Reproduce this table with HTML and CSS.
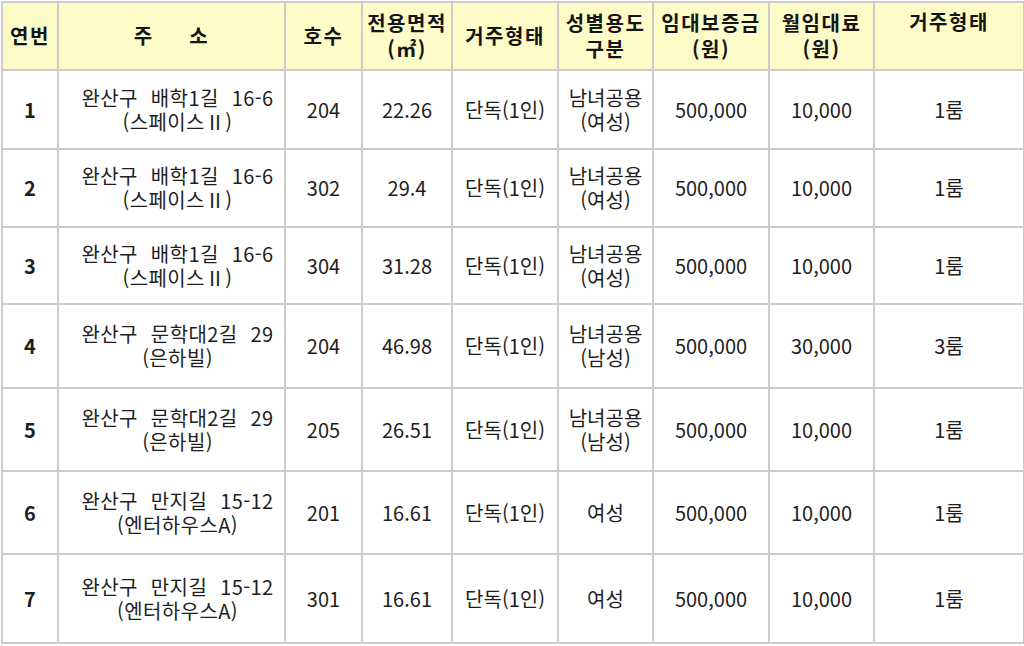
FILE: index.html
```html
<!DOCTYPE html>
<html lang="ko">
<head>
<meta charset="utf-8">
<link rel="stylesheet" href="styles.css">
</head>
<body>
<table class="tbl">
  <colgroup>
    <col class="c1"><col class="c2"><col class="c3"><col class="c4"><col class="c5"><col class="c6"><col class="c7"><col class="c8"><col class="c9">
  </colgroup>
  <thead>
    <tr>
      <th>연번</th>
      <th>주&nbsp;&nbsp;&nbsp;&nbsp;&nbsp;소</th>
      <th>호수</th>
      <th>전용면적<br>(㎡)</th>
      <th>거주형태</th>
      <th>성별용도<br>구분</th>
      <th>임대보증금<br>(원)</th>
      <th>월임대료<br>(원)</th>
      <th class="top">거주형태</th>
    </tr>
  </thead>
  <tbody>
    <tr class="r1">
      <td class="no">1</td><td class="addr">완산구 배학1길 16-6<br>(스페이스Ⅱ)</td><td>204</td><td>22.26</td><td>단독(1인)</td><td>남녀공용<br>(여성)</td><td>500,000</td><td>10,000</td><td>1룸</td>
    </tr>
    <tr class="r2">
      <td class="no">2</td><td class="addr">완산구 배학1길 16-6<br>(스페이스Ⅱ)</td><td>302</td><td>29.4</td><td>단독(1인)</td><td>남녀공용<br>(여성)</td><td>500,000</td><td>10,000</td><td>1룸</td>
    </tr>
    <tr class="r3">
      <td class="no">3</td><td class="addr">완산구 배학1길 16-6<br>(스페이스Ⅱ)</td><td>304</td><td>31.28</td><td>단독(1인)</td><td>남녀공용<br>(여성)</td><td>500,000</td><td>10,000</td><td>1룸</td>
    </tr>
    <tr class="r4">
      <td class="no">4</td><td class="addr">완산구 문학대2길 29<br>(은하빌)</td><td>204</td><td>46.98</td><td>단독(1인)</td><td>남녀공용<br>(남성)</td><td>500,000</td><td>30,000</td><td>3룸</td>
    </tr>
    <tr class="r5">
      <td class="no">5</td><td class="addr">완산구 문학대2길 29<br>(은하빌)</td><td>205</td><td>26.51</td><td>단독(1인)</td><td>남녀공용<br>(남성)</td><td>500,000</td><td>10,000</td><td>1룸</td>
    </tr>
    <tr class="r6">
      <td class="no">6</td><td class="addr">완산구 만지길 15-12<br>(엔터하우스A)</td><td>201</td><td>16.61</td><td>단독(1인)</td><td>여성</td><td>500,000</td><td>10,000</td><td>1룸</td>
    </tr>
    <tr class="r7">
      <td class="no">7</td><td class="addr">완산구 만지길 15-12<br>(엔터하우스A)</td><td>301</td><td>16.61</td><td>단독(1인)</td><td>여성</td><td>500,000</td><td>10,000</td><td>1룸</td>
    </tr>
  </tbody>
</table>
</body>
</html>
```
FILE: styles.css
```css
html, body {
  margin: 0;
  padding: 0;
  background: #ffffff;
}
body {
  padding: 1px 0 0 1px;
  font-family: "Noto Sans CJK KR", "Noto Sans", sans-serif;
  color: #1e1e1e;
}
.tbl {
  border-collapse: collapse;
  table-layout: fixed;
  width: 1022px;
  border: 2px solid #a8a8a8;
}
.c1 { width: 56px; }
.c2 { width: 227px; }
.c3 { width: 77px; }
.c4 { width: 90px; }
.c5 { width: 106px; }
.c6 { width: 95px; }
.c7 { width: 116px; }
.c8 { width: 105px; }
.c9 { width: 150px; }
.tbl th, .tbl td {
  border: 2px solid #cccccc;
  text-align: center;
  vertical-align: middle;
  padding: 0;
}
.tbl th {
  background: #fdfbc8;
  font-weight: 700;
  font-size: 20px;
  line-height: 26px;
  height: 66px;
  letter-spacing: 1.5px;
  color: #151515;
}
.tbl th.top {
  vertical-align: top;
  padding-top: 6px;
  height: 60px;
}
.tbl td {
  font-size: 20px;
  line-height: 24px;
}
.tbl td.addr {
  word-spacing: 7px;
  letter-spacing: 0.4px;
  padding-left: 12px;
}
.tbl td.no {
  font-weight: 700;
}
.r1 td { height: 77px; }
.r2 td { height: 76px; }
.r3 td { height: 75px; }
.r4 td { height: 82px; }
.r5 td { height: 81px; }
.r6 td { height: 81px; }
.r7 td { height: 87px; }
```
